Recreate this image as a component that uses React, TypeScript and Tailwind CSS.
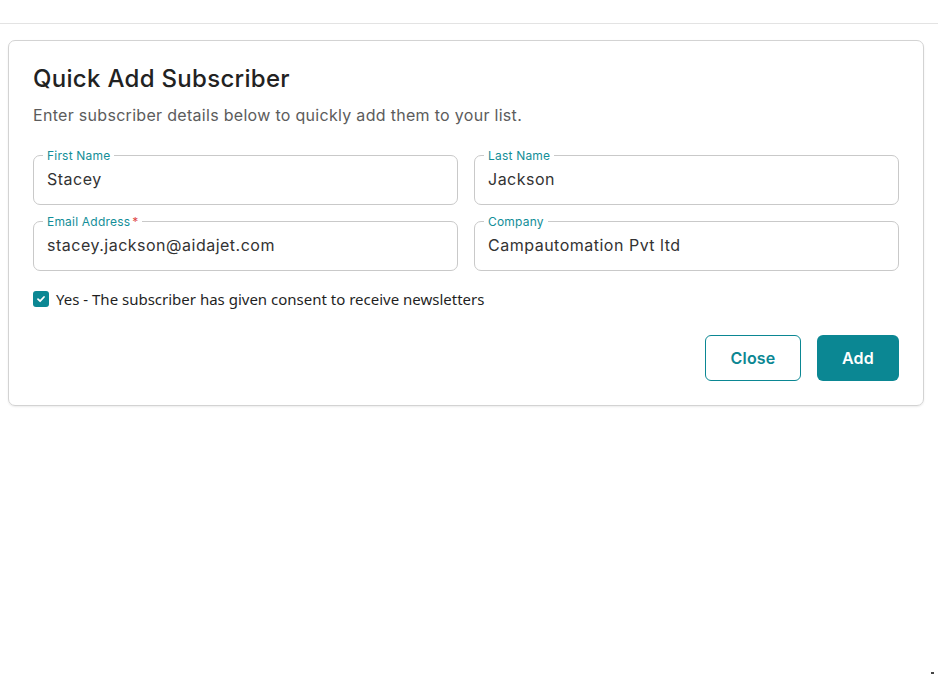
import React from "react";

function Field({ label, value, required }: { label: string; value: string; required?: boolean }) {
  return (
    <div className="relative h-[50px] rounded-[7px] border border-[#c9c9c9] flex items-center px-[13px]">
      <span className="absolute left-[9px] top-[-8px] bg-white px-[4px] text-[12px] leading-[16px] tracking-[0.2px] text-[#138e98]">
        {label}
        {required && <span className="text-[#e04848] ml-[2px]">*</span>}
      </span>
      <span className="text-[16px] tracking-[0.5px] text-[#333333] mt-[-2px]">{value}</span>
    </div>
  );
}

export default function App() {
  return (
    <div className="relative min-h-[675px] bg-white" style={{ fontFamily: "Inter, 'Noto Sans', sans-serif" }}>
      <div className="h-[24px] border-b border-[#e3e3e3]" />
      <div className="ml-[8px] mr-[14px] mt-[16px] rounded-[7px] border border-[#d3d3d3] shadow-[0_1px_2px_rgba(0,0,0,0.08)] px-[24px] pt-[22px] pb-[24px]">
        <h1 className="text-[24px] leading-[32px] font-medium text-[#222222] tracking-[0.3px]">Quick Add Subscriber</h1>
        <p className="mt-[8px] text-[16px] leading-[24px] tracking-[0.3px] text-[#5c5c5c]">
          Enter subscriber details below to quickly add them to your list.
        </p>
        <div className="mt-[28px] grid grid-cols-2 gap-x-[16px] gap-y-[16px]">
          <Field label="First Name" value="Stacey" />
          <Field label="Last Name" value="Jackson" />
          <Field label="Email Address" value="stacey.jackson@aidajet.com" required />
          <Field label="Company" value="Campautomation Pvt ltd" />
        </div>
        <div className="mt-[16px] flex items-center gap-[7px]">
          <span className="w-[16px] h-[16px] rounded-[3px] bg-[#0b8793] flex items-center justify-center">
            <svg width="10" height="10" viewBox="0 0 10 10" fill="none">
              <path d="M2 5.2 L4.1 7.2 L8 3" stroke="white" strokeWidth="1.8" strokeLinecap="round" strokeLinejoin="round" />
            </svg>
          </span>
          <span className="text-[15px] leading-[24px] text-[#1f1f1f]" style={{ fontFamily: "'Noto Sans', 'Open Sans', sans-serif" }}>
            Yes - The subscriber has given consent to receive newsletters
          </span>
        </div>
        <div className="mt-[24px] flex justify-end gap-[16px]">
          <button className="w-[96px] h-[46px] rounded-[6px] border border-[#0b8793] text-[#0b8793] text-[16px] font-semibold tracking-[0.2px] bg-white">
            Close
          </button>
          <button className="w-[82px] h-[46px] rounded-[6px] bg-[#0b8793] text-white text-[16px] font-semibold tracking-[0.2px]">
            Add
          </button>
        </div>
      </div>
      <div className="absolute right-[4px] bottom-[1px] w-[3px] h-[2px] bg-[#444]" />
    </div>
  );
}
